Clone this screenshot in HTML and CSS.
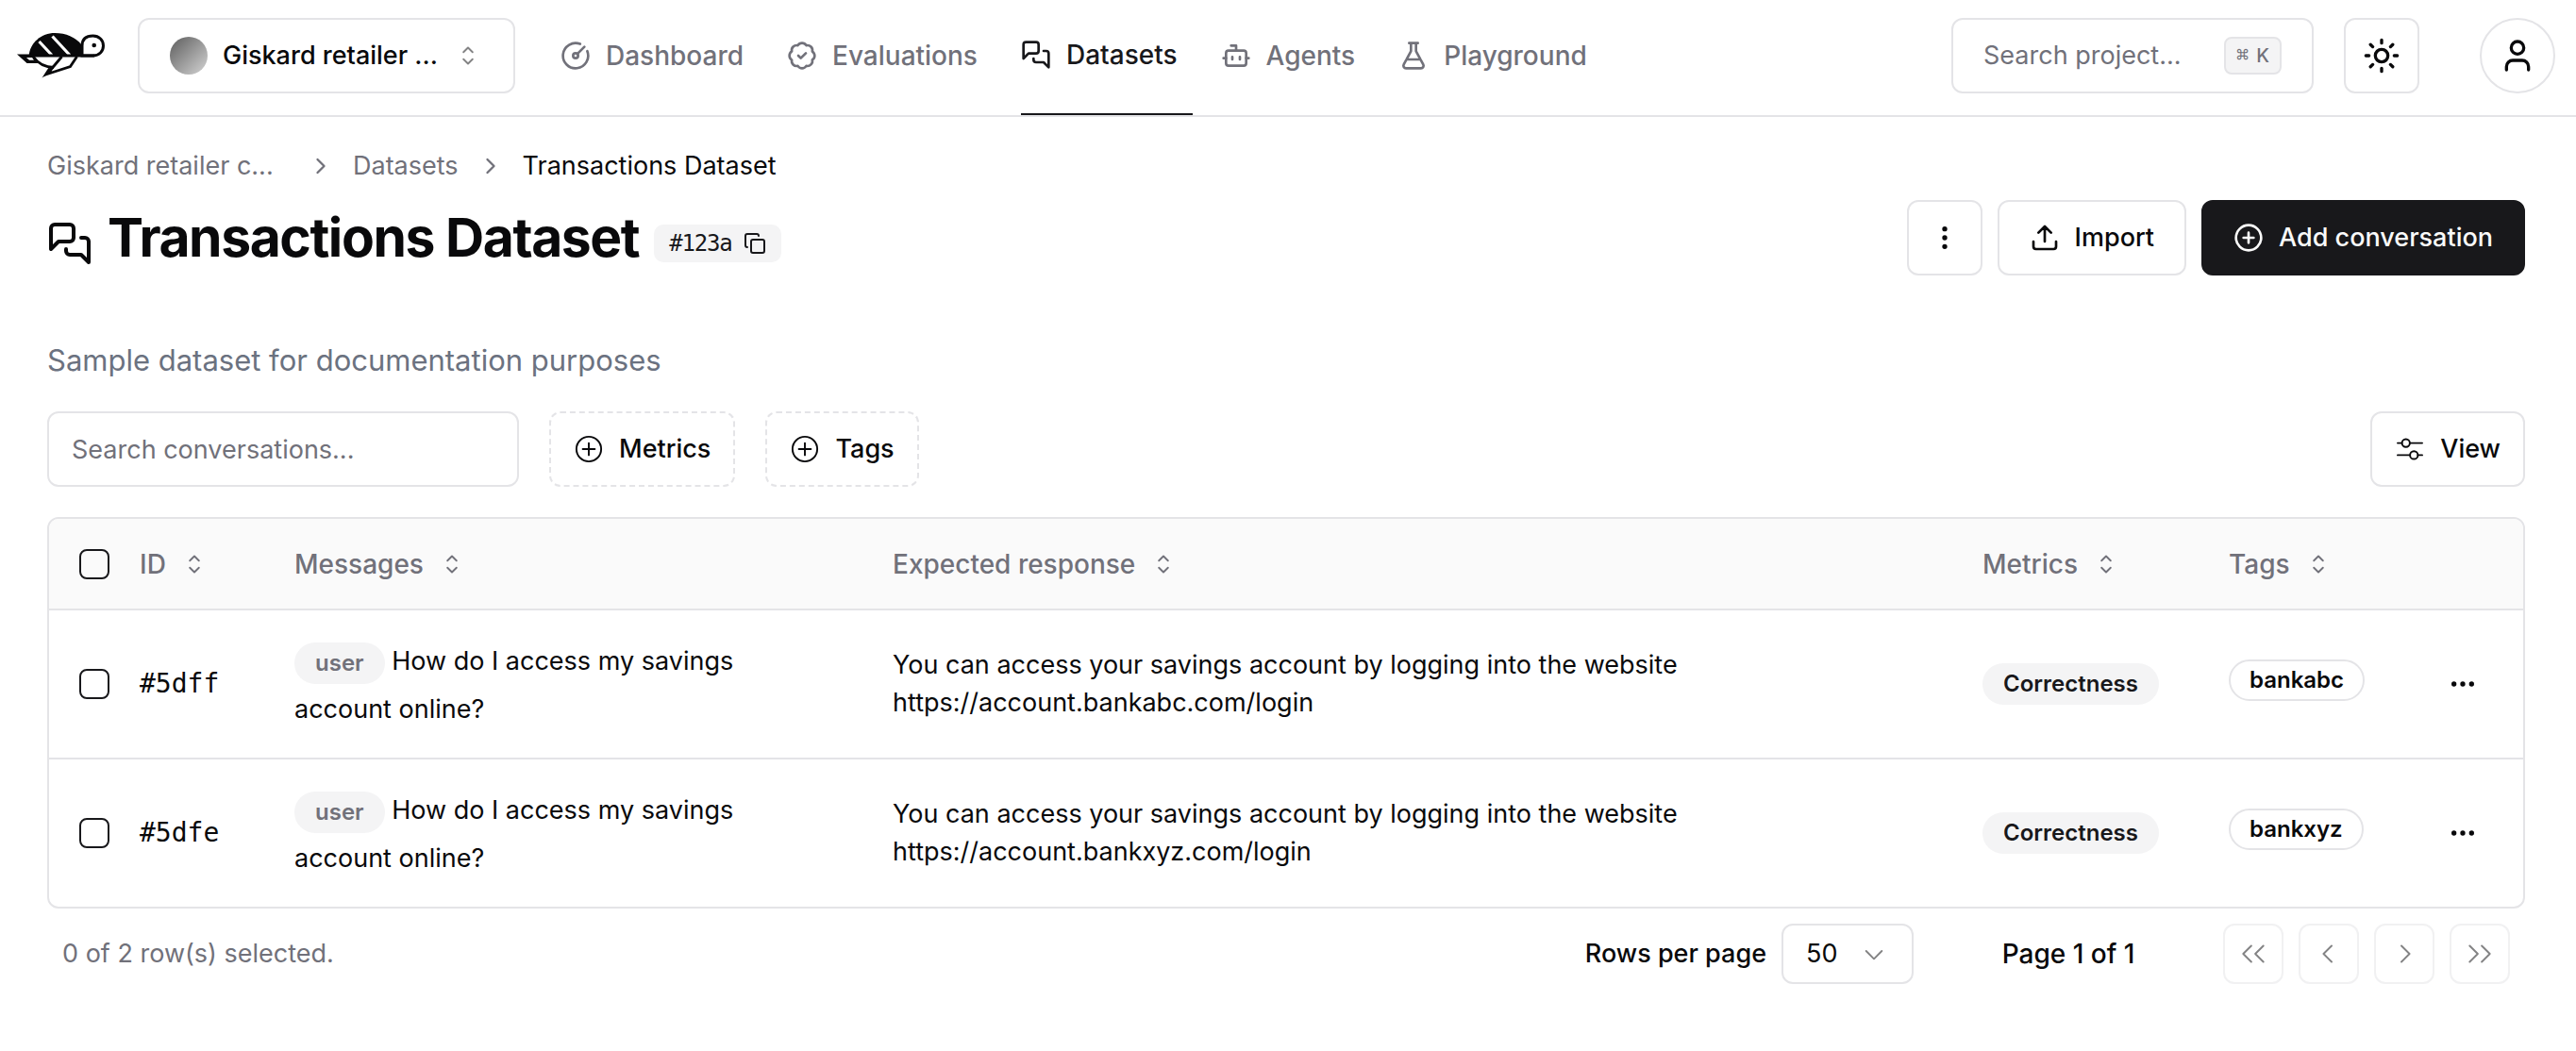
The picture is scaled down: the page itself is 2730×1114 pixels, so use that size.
FILE: index.html
```html
<!DOCTYPE html>
<html lang="en">
<head>
<meta charset="utf-8">
<meta name="viewport" content="width=device-width, initial-scale=1">
<title>Transactions Dataset</title>
<link rel="stylesheet" href="styles.css">
</head>
<body>
<svg class="sprite" aria-hidden="true">
  <symbol id="messages" viewBox="0 0 24 24"><path d="M14 9a2 2 0 0 1-2 2H6l-4 4V4a2 2 0 0 1 2-2h8a2 2 0 0 1 2 2z"/><path d="M18 9h2a2 2 0 0 1 2 2v11l-4-4h-6a2 2 0 0 1-2-2v-1"/></symbol>
  <symbol id="circle-plus" viewBox="0 0 24 24"><circle cx="12" cy="12" r="10"/><path d="M8 12h8M12 8v8"/></symbol>
  <symbol id="chevron-right" viewBox="0 0 24 24"><path d="m9 18 6-6-6-6"/></symbol>
  <symbol id="ellipsis" viewBox="0 0 24 24"><circle cx="12" cy="12" r="1"/><circle cx="19" cy="12" r="1"/><circle cx="5" cy="12" r="1"/></symbol>
  <symbol id="sort" viewBox="0 0 15 15"><path d="M5.25 5.75 7.5 3.5l2.25 2.25M5.25 9.25l2.25 2.25 2.25-2.25"/></symbol>
  <symbol id="plus-thin" viewBox="0 0 15 15"><circle cx="7.5" cy="7.5" r="6.15"/><path d="M7.5 4.5v6M4.5 7.5h6"/></symbol>
</svg>

<header class="topbar">
  <a class="logo" href="#" aria-label="Home">
    <svg viewBox="0 0 94 50" width="94" height="50">
      <path d="M12.500 26C13.500 11 26 1 40 1c12 0 22 4.500 28 12l2 13z" fill="#09090b"/>
      <path d="M69 25V14.500C69 7 74 4 80.500 4 87 4 91.500 8.500 91.500 14.500S87 25 80.500 25z" fill="#fff" stroke="#09090b" stroke-width="3"/>
      <circle cx="81.700" cy="14" r="2.300" fill="#09090b"/>
      <path d="M23.500 10 37 24.500M37.500 4.500 56 24.500" stroke="#fff" stroke-width="3.200" fill="none"/>
      <path d="M0 23.500h82v3H19l4 6.500H10.500z" fill="#09090b"/>
      <path d="M10 27h6l2 2.800h-5z" fill="#fff"/>
      <path d="M18 27q7 10 21 10.500M47.500 26 32 44.500l24.500-8L63.500 26" fill="none" stroke="#09090b" stroke-width="2.800"/>
      <path d="M26.500 48.500 34 37l3 5z" fill="#09090b"/>
    </svg>
  </a>
  <button class="btn project" type="button">
    <span class="avatar"></span><span class="project-name">Giskard retailer ...</span>
    <svg class="icon thin faded"><use href="#sort"/></svg>
  </button>
  <nav class="nav" aria-label="Main">
    <a href="#"><svg class="icon" viewBox="0 0 24 24"><path d="M15.600 2.700a10 10 0 1 0 5.700 5.700"/><circle cx="12" cy="12" r="2"/><path d="M13.400 10.600 19 5"/></svg>Dashboard</a>
    <a href="#"><svg class="icon" viewBox="0 0 24 24"><path d="M3.850 8.620a4 4 0 0 1 4.780-4.770 4 4 0 0 1 6.740 0 4 4 0 0 1 4.780 4.780 4 4 0 0 1 0 6.740 4 4 0 0 1-4.770 4.780 4 4 0 0 1-6.750 0 4 4 0 0 1-4.780-4.770 4 4 0 0 1 0-6.760Z"/><path d="m9 12 2 2 4-4"/></svg>Evaluations</a>
    <a href="#" class="active" aria-current="page"><svg class="icon"><use href="#messages"/></svg>Datasets</a>
    <a href="#"><svg class="icon" viewBox="0 0 24 24"><path d="M12 8V4H8"/><rect width="16" height="12" x="4" y="8" rx="2"/><path d="M2 14h2M20 14h2M15 13v2M9 13v2"/></svg>Agents</a>
    <a href="#"><svg class="icon" viewBox="0 0 24 24"><path d="M14 2v6a2 2 0 0 0 .245.960l5.510 10.080A2 2 0 0 1 18 22H6a2 2 0 0 1-1.755-2.960l5.510-10.080A2 2 0 0 0 10 8V2M6.453 15h11.094M8.500 2h7"/></svg>Playground</a>
  </nav>
  <div class="tools">
    <button class="btn finder" type="button"><span>Search project...</span><kbd><span>⌘</span> K</kbd></button>
    <button class="btn square" type="button" aria-label="Toggle theme"><svg class="icon icon-40" viewBox="0 0 24 24"><circle cx="12" cy="12" r="4"/><path d="M12 2v2M12 20v2M4.930 4.930l1.410 1.410M17.660 17.660l1.410 1.410M2 12h2M20 12h2M6.340 17.660l-1.410 1.410M19.070 4.930l-1.410 1.410"/></svg></button>
    <button class="btn square round" type="button" aria-label="Account"><svg class="icon icon-40" viewBox="0 0 24 24"><path d="M19 21v-2a4 4 0 0 0-4-4H9a4 4 0 0 0-4 4v2"/><circle cx="12" cy="7" r="4"/></svg></button>
  </div>
</header>

<main class="page">
  <nav class="crumbs" aria-label="Breadcrumb">
    <a class="crumb-project" href="#">Giskard retailer c...</a>
    <svg class="icon icon-28"><use href="#chevron-right"/></svg>
    <a href="#">Datasets</a>
    <svg class="icon icon-28"><use href="#chevron-right"/></svg>
    <span class="here" aria-current="page">Transactions Dataset</span>
  </nav>

  <div class="title-row">
    <svg class="icon icon-48 lowered"><use href="#messages"/></svg>
    <h1>Transactions Dataset</h1>
    <button class="ident lowered" type="button">#123a<svg class="icon icon-24" viewBox="0 0 24 24"><rect width="14" height="14" x="8" y="8" rx="2"/><path d="M4 16c-1.100 0-2-.900-2-2V4c0-1.100.900-2 2-2h10c1.100 0 2 .900 2 2"/></svg></button>
    <div class="actions">
      <button class="btn square" type="button" aria-label="More actions"><svg class="icon" viewBox="0 0 24 24"><circle cx="12" cy="12" r="1"/><circle cx="12" cy="5" r="1"/><circle cx="12" cy="19" r="1"/></svg></button>
      <button class="btn wide" type="button"><svg class="icon" viewBox="0 0 24 24"><path d="M12 3v12M17 8l-5-5-5 5M21 15v4a2 2 0 0 1-2 2H5a2 2 0 0 1-2-2v-4"/></svg>Import</button>
      <button class="btn wide primary" type="button"><svg class="icon"><use href="#circle-plus"/></svg>Add conversation</button>
    </div>
  </div>

  <p class="summary">Sample dataset for documentation purposes</p>

  <div class="filters">
    <input class="search" type="text" placeholder="Search conversations..." aria-label="Search conversations">
    <button class="btn dashed" type="button"><svg class="icon thin"><use href="#plus-thin"/></svg>Metrics</button>
    <button class="btn dashed" type="button"><svg class="icon thin"><use href="#plus-thin"/></svg>Tags</button>
    <button class="btn view" type="button"><svg class="icon thin" viewBox="0 0 15 15"><circle cx="5.500" cy="4.500" r="1.950"/><circle cx="9.500" cy="10.500" r="1.950"/><path d="M1.400 4.500h2.100M7.500 4.500h6.100M1.400 10.500h6.100M11.500 10.500h2.100"/></svg>View</button>
  </div>

  <div class="table-box">
    <table>
      <thead>
        <tr>
          <th class="col-check"><input type="checkbox" aria-label="Select all"></th>
          <th class="col-id"><button class="sort" type="button">ID<svg class="icon thin"><use href="#sort"/></svg></button></th>
          <th class="col-messages"><button class="sort" type="button">Messages<svg class="icon thin"><use href="#sort"/></svg></button></th>
          <th><button class="sort" type="button">Expected response<svg class="icon thin"><use href="#sort"/></svg></button></th>
          <th class="col-metrics"><button class="sort" type="button">Metrics<svg class="icon thin"><use href="#sort"/></svg></button></th>
          <th class="col-tags"><button class="sort" type="button">Tags<svg class="icon thin"><use href="#sort"/></svg></button></th>
          <th class="col-menu"></th>
        </tr>
      </thead>
      <tbody>
        <tr>
          <td class="col-check"><input type="checkbox" aria-label="Select #5dff"></td>
          <td class="mono">#5dff</td>
          <td><p class="message"><span class="badge role">user</span> How do I access my savings account online?</p></td>
          <td>You can access your savings account by logging into the website<br>https://account.bankabc.com/login</td>
          <td><span class="badge">Correctness</span></td>
          <td class="tags"><span class="badge outline">bankabc</span></td>
          <td class="col-menu"><button class="more" type="button" aria-label="Row actions"><svg class="icon"><use href="#ellipsis"/></svg></button></td>
        </tr>
        <tr>
          <td class="col-check"><input type="checkbox" aria-label="Select #5dfe"></td>
          <td class="mono">#5dfe</td>
          <td><p class="message"><span class="badge role">user</span> How do I access my savings account online?</p></td>
          <td>You can access your savings account by logging into the website<br>https://account.bankxyz.com/login</td>
          <td><span class="badge">Correctness</span></td>
          <td class="tags"><span class="badge outline">bankxyz</span></td>
          <td class="col-menu"><button class="more" type="button" aria-label="Row actions"><svg class="icon"><use href="#ellipsis"/></svg></button></td>
        </tr>
      </tbody>
    </table>
  </div>

  <footer class="pager">
    <span class="selected">0 of 2 row(s) selected.</span>
    <div class="per-page">
      <label for="rows">Rows per page</label>
      <span class="select"><select id="rows"><option>50</option></select><svg class="icon thin faded" viewBox="0 0 15 15"><path d="M3.600 6.100 7.500 10l3.900-3.900"/></svg></span>
    </div>
    <span class="count">Page 1 of 1</span>
    <div class="steps">
      <button class="btn step" type="button" disabled aria-label="First page"><svg class="icon thin" viewBox="0 0 15 15"><path d="M6.500 3.500l-4 4 4 4M12.500 3.500l-4 4 4 4"/></svg></button>
      <button class="btn step" type="button" disabled aria-label="Previous page"><svg class="icon thin" viewBox="0 0 15 15"><path d="M8.900 3.500l-4 4 4 4"/></svg></button>
      <button class="btn step" type="button" disabled aria-label="Next page"><svg class="icon thin" viewBox="0 0 15 15"><path d="M6.100 3.500l4 4-4 4"/></svg></button>
      <button class="btn step" type="button" disabled aria-label="Last page"><svg class="icon thin" viewBox="0 0 15 15"><path d="M2.500 3.500l4 4-4 4M8.500 3.500l4 4-4 4"/></svg></button>
    </div>
  </footer>
</main>
</body>
</html>
```
FILE: styles.css
```css
:root {
  --ink: #09090b;
  --muted: #71717a;
  --line: #e4e4e7;
  --soft: #f4f4f5;
  --mono: "DejaVu Sans Mono", monospace;
}

* { box-sizing: border-box; }

body {
  margin: 0;
  background: #fff;
  color: var(--ink);
  font: 400 27px/40px Inter, sans-serif;
}

h1, p { margin: 0; }
a { color: inherit; text-decoration: none; }
button, input, select { font: inherit; color: inherit; }
button { cursor: pointer; }
button:disabled { cursor: default; }
.sprite { display: none; }

.icon {
  width: 32px;
  height: 32px;
  flex: none;
  fill: none;
  stroke: currentColor;
  stroke-width: 2;
  stroke-linecap: round;
  stroke-linejoin: round;
}
.icon-24 { width: 24px; height: 24px; }
.icon-28 { width: 28px; height: 28px; }
.icon-40 { width: 40px; height: 40px; }
.icon-48 { width: 48px; height: 48px; }
.thin { stroke-width: 0.9; }
.faded { opacity: 0.5; }

.btn {
  display: inline-flex;
  align-items: center;
  justify-content: center;
  gap: 16px;
  height: 80px;
  padding: 0 24px;
  border: 2px solid var(--line);
  border-radius: 12px;
  background: #fff;
  font-weight: 500;
  white-space: nowrap;
}
.wide { padding: 0 32px; }
.square { width: 80px; padding: 0; }
.round { border-radius: 50%; margin-left: 32px; }
.dashed { border-style: dashed; }
.primary { background: #18181b; border-color: #18181b; color: #fafafa; }
.view { margin-left: auto; }

/* Top bar */
.topbar {
  display: flex;
  align-items: center;
  height: 124px;
  padding: 0 22px 4px 18px;
  border-bottom: 2px solid var(--line);
}
.logo { display: flex; width: 94px; margin-right: 34px; }
.project { width: 400px; justify-content: flex-start; padding: 0 32px; }
.project .icon { margin-left: auto; }
.avatar {
  flex: none;
  width: 40px;
  height: 40px;
  border-radius: 50%;
  background: linear-gradient(135deg, #5c5c5c, #d4d4d4);
}
.nav { display: flex; align-self: stretch; gap: 30px; margin: 0 48px; font-size: 28px; }
.nav a {
  display: flex;
  align-items: center;
  gap: 16px;
  height: 122px;
  padding: 0 16px 4px 0;
  color: var(--muted);
  font-weight: 500;
}
.nav .active { color: #18181b; border-bottom: 2px solid #18181b; }
.tools { display: flex; gap: 32px; margin-left: auto; }
.finder {
  width: 384px;
  justify-content: space-between;
  padding: 0 32px;
  color: var(--muted);
  font-weight: 400;
}
kbd {
  display: flex;
  align-items: center;
  gap: 8px;
  height: 40px;
  padding: 0 11px;
  border: 2px solid var(--line);
  border-radius: 8px;
  background: var(--soft);
  font: 500 20px/36px Inter, sans-serif;
}
kbd span { font: 22px/36px var(--mono); }

/* Page heading */
.page { padding: 32px 54px 48px 50px; }
.crumbs { display: flex; align-items: center; gap: 20px; color: var(--muted); }
.crumb-project { width: 256px; }
.here { color: var(--ink); }
.title-row { display: flex; align-items: center; gap: 16px; margin-top: 16px; }
.title-row h1 { font-size: 57px; line-height: 72px; font-weight: 700; letter-spacing: -0.025em; }
.lowered { margin-top: 12px; }
.ident {
  display: flex;
  align-items: center;
  gap: 12px;
  height: 40px;
  padding: 0 16px;
  border: 0;
  border-radius: 10px;
  background: var(--soft);
  color: #18181b;
  font: 24px/40px var(--mono);
  letter-spacing: -0.05em;
}
.actions { display: flex; gap: 16px; margin-left: auto; }
.summary { margin-top: 64px; padding-top: 2px; color: #6b7280; font-size: 31px; line-height: 48px; }

/* Filters */
.filters { display: flex; gap: 32px; margin-top: 30px; }
.search {
  width: 500px;
  height: 80px;
  padding: 0 24px;
  border: 2px solid var(--line);
  border-radius: 12px;
}
.search::placeholder { color: var(--muted); opacity: 1; }

/* Table */
.table-box {
  margin-top: 32px;
  border: 2px solid var(--line);
  border-radius: 12px;
  overflow: hidden;
}
table { width: 100%; table-layout: fixed; border-collapse: separate; border-spacing: 0; }
th { height: 97px; padding: 0 16px; background: #fafafa; border-bottom: 2px solid var(--line); text-align: left; }
td { height: 158px; padding: 0 16px; border-bottom: 2px solid var(--line); }
tbody tr:last-child td { height: 156px; border-bottom: 0; }
.col-check { width: 80px; padding: 0 0 0 32px; }
.col-id { width: 164px; }
.col-messages { width: 634px; }
.col-metrics { width: 261px; }
.col-tags { width: 200px; }
.col-menu { width: 128px; padding: 0 32px; }
input[type="checkbox"] {
  appearance: none;
  display: block;
  width: 32px;
  height: 32px;
  margin: 0;
  border: 2px solid #18181b;
  border-radius: 8px;
}
input[type="checkbox"]:checked { background: #18181b; }
.sort {
  display: flex;
  align-items: center;
  gap: 14px;
  padding: 0;
  border: 0;
  background: none;
  color: var(--muted);
  font-size: 28px;
  font-weight: 500;
  white-space: nowrap;
}
.mono { font-family: var(--mono); font-size: 28px; }
.message { width: 500px; padding-top: 2px; line-height: 51px; }
.badge {
  display: inline-flex;
  align-items: center;
  height: 44px;
  padding: 0 22px;
  border-radius: 22px;
  background: var(--soft);
  color: #18181b;
  font-size: 24px;
  line-height: 32px;
  font-weight: 600;
  vertical-align: middle;
}
.role { color: var(--muted); }
.outline { padding: 0 20px; border: 2px solid var(--line); background: #fff; color: var(--ink); }
.tags { padding-bottom: 8px; }
.more { display: flex; align-items: center; justify-content: center; width: 64px; height: 64px; padding: 0; border: 0; background: none; }

/* Pager */
.pager { display: flex; align-items: center; gap: 64px; margin-top: 16px; padding: 0 16px; font-weight: 500; }
.selected { margin-right: auto; color: var(--muted); font-weight: 400; }
.per-page { display: flex; align-items: center; gap: 16px; }
.select { display: flex; align-items: center; width: 140px; position: relative; }
.select select {
  appearance: none;
  width: 100%;
  height: 64px;
  padding: 0 24px;
  border: 2px solid var(--line);
  border-radius: 12px;
  background: #fff;
  font-weight: 400;
}
.select .icon { position: absolute; right: 26px; pointer-events: none; }
.count { width: 200px; font-size: 28px; text-align: center; }
.steps { display: flex; gap: 16px; }
.step { width: 64px; height: 64px; padding: 0; opacity: 0.5; }
```
